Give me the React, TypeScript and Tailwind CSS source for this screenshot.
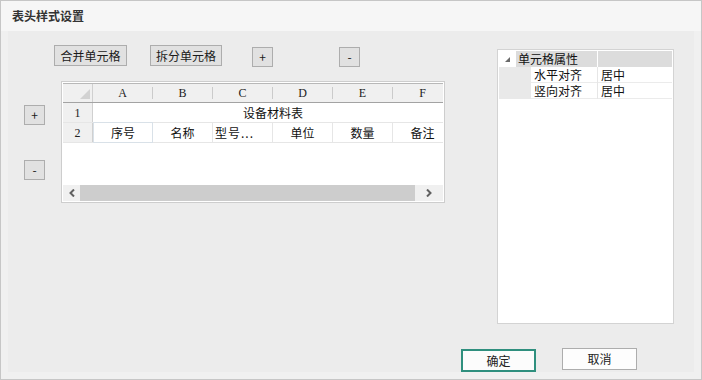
import React from "react";

const cjk = "font-['Noto_Sans_CJK_SC','Noto_Sans',sans-serif]";

const Btn = ({ children, className = "" }: { children: React.ReactNode; className?: string }) => (
  <button className={`flex shrink-0 items-center justify-center border border-[#adadad] bg-[#e1e1e1] text-[12px] leading-none text-[#1a1a1a] ${className}`}>
    {children}
  </button>
);

const Chevron = ({ dir }: { dir: "left" | "right" }) => (
  <svg width="6" height="8" viewBox="0 0 6 8">
    <path d={dir === "left" ? "M5 0.5 L1.5 4 L5 7.5" : "M1 0.5 L4.5 4 L1 7.5"} fill="none" stroke="#606060" strokeWidth="2" />
  </svg>
);

const cols = ["A", "B", "C", "D", "E", "F"];
const row2 = ["序号", "名称", "型号...", "单位", "数量", "备注"];

const Sheet = () => (
  <div className="ml-[16px] flex h-[122px] w-[384px] shrink-0 flex-col border border-[#cdcdcd] bg-white p-[1px]">
    <div className="flex flex-1 flex-col overflow-hidden">
      {/* column header */}
      <div className="flex h-[20px] shrink-0 border-t border-b border-t-[#b8b8b8] border-b-[#a3a3a3] bg-[#f0f0f0]">
        <div className="flex w-[30px] shrink-0 items-end justify-end border-r border-[#d0d0d0] pr-[2px] pb-[3px]">
          <svg width="10" height="10" viewBox="0 0 10 10">
            <polygon points="10,0 10,10 0,10" fill="#d2d2d2" />
          </svg>
        </div>
        {cols.map((c) => (
          <div key={c} className="flex w-[60px] shrink-0 items-center">
            <span className="flex-1 text-center font-['Liberation_Serif',serif] text-[12px] leading-none text-[#222]">{c}</span>
            <div className="h-[12px] w-px bg-[#cbcbcb]" />
          </div>
        ))}
      </div>
      {/* row 1 */}
      <div className="flex h-[20px] shrink-0 border-b border-[#e6e6e6]">
        <div className="flex w-[30px] shrink-0 items-center justify-center border-r border-[#d0d0d0] bg-[#f0f0f0] font-['Liberation_Serif',serif] text-[12px] leading-none text-[#222]">1</div>
        <div className="flex w-[360px] shrink-0 items-center justify-center text-[12px] leading-none text-[#111]">设备材料表</div>
      </div>
      {/* row 2 */}
      <div className="flex h-[20px] shrink-0 border-b border-[#e6e6e6]">
        <div className="flex w-[30px] shrink-0 items-center justify-center border-r border-[#d0d0d0] bg-[#f0f0f0] font-['Liberation_Serif',serif] text-[12px] leading-none text-[#222]">2</div>
        {row2.map((t, i) => (
          <div
            key={t}
            className={`flex w-[60px] shrink-0 items-center text-[12px] leading-none text-[#111] ${
              i === 0
                ? "justify-center shadow-[inset_0_0_0_1px_#d9e1e8] -mt-px h-[21px]"
                : i === 2
                ? "justify-start border-r border-[#e6e6e6] pl-[2px] tracking-[1px]"
                : "justify-center border-r border-[#e6e6e6]"
            }`}
          >
            {t}
          </div>
        ))}
      </div>
      <div className="flex-1" />
      {/* scrollbar */}
      <div className="flex h-[16px] shrink-0 bg-[#f0f0f0]">
        <div className="flex w-[17px] items-center justify-center">
          <Chevron dir="left" />
        </div>
        <div className="w-[335px] bg-[#cdcdcd]" />
        <div className="flex flex-1 items-center justify-center">
          <Chevron dir="right" />
        </div>
      </div>
    </div>
  </div>
);

const PropGrid = () => (
  <div className="mt-[18px] flex h-[275px] w-[177px] shrink-0 flex-col border border-[#d3d3d3] bg-white p-[1px] text-[12px] leading-none text-[#111]">
    <div className="flex h-[16px] shrink-0">
      <div className="flex w-[17px] shrink-0 items-center justify-center">
        <svg width="5" height="5" viewBox="0 0 5 5">
          <polygon points="5,0 5,5 0,5" fill="#6a6a6a" />
        </svg>
      </div>
      <div className="flex w-[81px] shrink-0 items-center bg-[#dcdcdc] pl-[2px]">单元格属性</div>
      <div className="w-px shrink-0 bg-white" />
      <div className="flex-1 bg-[#dcdcdc]" />
    </div>
    {[
      ["水平对齐", "居中"],
      ["竖向对齐", "居中"],
    ].map(([k, v]) => (
      <div key={k} className="flex h-[16px] shrink-0">
        <div className="w-[32px] shrink-0 bg-[#e9e9e9]" />
        <div className="flex w-[66px] shrink-0 items-center border-b border-[#ebebeb] pl-[3px]">{k}</div>
        <div className="w-px shrink-0 bg-[#e6e6e6]" />
        <div className="flex flex-1 items-center border-b border-[#ebebeb] pl-[3px]">{v}</div>
      </div>
    ))}
  </div>
);

export default function App() {
  return (
    <div className={`flex h-[380px] w-[702px] flex-col border border-[#c6c6c6] bg-[#f0f0f0] ${cjk}`}>
      <div className="flex h-[30px] shrink-0 items-center bg-[#f6f6f6] pl-[11px] text-[12px] font-bold text-[#333]">表头样式设置</div>
      <div className="mx-[7px] flex h-[341px] w-[686px] flex-col bg-[#ececec]">
        <div className="flex">
          <div className="flex w-[489px] shrink-0 flex-col pt-[14px]">
            <div className="flex items-start pl-[46px]">
              <Btn className="h-[21px] w-[73px]">合并单元格</Btn>
              <Btn className="ml-[23px] h-[21px] w-[72px]">拆分单元格</Btn>
              <Btn className="mt-[2px] ml-[30px] h-[20px] w-[21px]">+</Btn>
              <Btn className="mt-[2px] ml-[66px] h-[20px] w-[21px]">-</Btn>
            </div>
            <div className="mt-[14px] flex">
              <div className="flex w-[37px] shrink-0 flex-col pl-[16px]">
                <Btn className="mt-[24px] h-[20px] w-[21px]">+</Btn>
                <Btn className="mt-[35px] h-[20px] w-[21px]">-</Btn>
              </div>
              <Sheet />
            </div>
          </div>
          <PropGrid />
        </div>
        <div className="mt-auto flex items-start pl-[453px]">
          <button className="mt-px flex h-[23px] w-[75px] items-center justify-center border-2 border-[#2f8f7e] bg-[#fcfcfc] text-[12px] leading-none text-[#222]">确定</button>
          <button className="ml-[26px] flex h-[22px] w-[75px] items-center justify-center border border-[#adadad] bg-[#fdfdfd] text-[12px] leading-none text-[#222]">取消</button>
        </div>
      </div>
    </div>
  );
}
